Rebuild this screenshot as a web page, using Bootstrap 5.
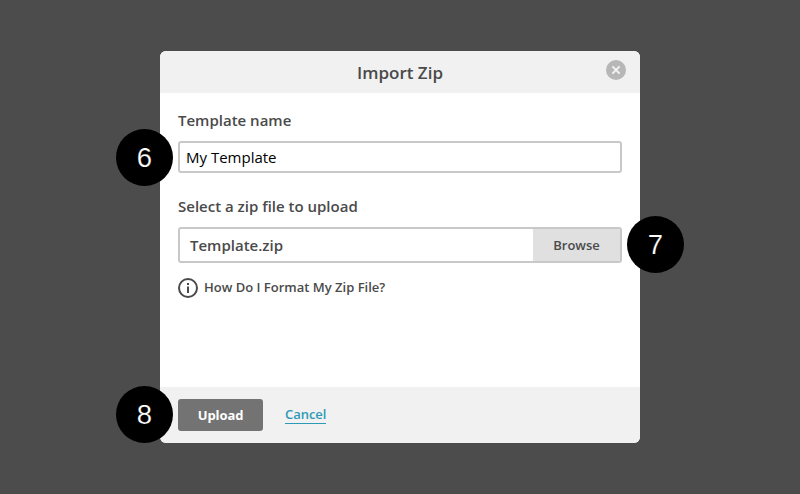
<!DOCTYPE html>
<html lang="en">
<head>
<meta charset="utf-8">
<meta name="viewport" content="width=device-width, initial-scale=1">
<title>Import Zip</title>
<link href="https://cdn.jsdelivr.net/npm/bootstrap@5.3.0/dist/css/bootstrap.min.css" rel="stylesheet">
<style>
  body { background: #4c4c4c; color: #4a4a4a; font: 600 15px/20px "Open Sans", sans-serif; height: 494px; }
  .dialog-box { width: 480px; height: 392px; margin-top: 51px; }
  .dialog-panel { border-radius: 6px; background: #fff; }
  .dialog-head { height: 42px; background: #f1f1f1; }
  .dialog-title { font-size: 17px; line-height: 24px; font-weight: 600; padding-top: 2px; }
  .close-btn { top: 9px; right: 14px; line-height: 0; }
  .dialog-main { padding: 17px 18px 0; }
  .field-label { line-height: 20px; margin-bottom: 11px; }
  .name-input { height: 32px; border: 2px solid #c8c8c8; border-radius: 3px; padding: 0 6px; font-size: 15px; font-weight: 400; color: #000; margin-bottom: 23px; }
  .file-box { height: 36px; border: 2px solid #c8c8c8; border-radius: 3px; }
  .file-name { padding-left: 10px; }
  .browse-btn { width: 87px; border-radius: 0; background: #e0e0e0; color: #4a4a4a; font-size: 13px; font-weight: 600; padding: 2px 0 0; border: 0; }
  .help-link { font-size: 13px; color: #4a4a4a; margin-top: 15px; gap: 6px; line-height: 20px; }
  .help-link span { margin-top: -2px; }
  .dialog-foot { height: 56px; background: #f1f1f1; padding: 0 18px; gap: 22px; }
  .upload-btn { width: 85px; height: 32px; padding: 1px 0 0; border: 0; border-radius: 3px; background: #737373; color: #fff; font-size: 13px; font-weight: 700; letter-spacing: -.1px; }
  .cancel-link { font-size: 13px; line-height: 17px; color: #2c9ab7; border-bottom: 1px solid #2c9ab7; margin-top: -1px; letter-spacing: -.05px; }
  .step { width: 57px; height: 57px; background: #000; color: #fff; font: 400 27.5px/58px "Liberation Sans", sans-serif; -webkit-text-stroke: .2px #000; }
  .step-6 { left: -44px; top: 78px; }
  .step-7 { left: 467px; top: 165px; }
  .step-8 { left: -44px; top: 335px; }
</style>
</head>
<body class="d-flex justify-content-center align-items-start overflow-hidden">
<div class="dialog-box position-relative" role="dialog" aria-labelledby="title">
  <div class="dialog-panel d-flex flex-column h-100 overflow-hidden">
    <header class="dialog-head d-flex justify-content-center align-items-center position-relative">
      <h1 class="dialog-title m-0" id="title">Import Zip</h1>
      <button type="button" class="close-btn btn p-0 border-0 position-absolute" aria-label="Close">
        <svg width="20" height="20" viewBox="0 0 20 20"><circle cx="10" cy="10" r="10" fill="#b7b7b7"/><path d="M6.4 6.4l7.2 7.2M13.6 6.4l-7.2 7.2" stroke="#f4f4f4" stroke-width="1.9"/></svg>
      </button>
    </header>
    <main class="dialog-main flex-grow-1">
      <label class="field-label d-block" for="name">Template name</label>
      <input id="name" class="name-input form-control shadow-none" type="text" value="My Template">
      <div class="field-label">Select a zip file to upload</div>
      <div class="file-box d-flex overflow-hidden">
        <span class="file-name flex-grow-1 align-self-center">Template.zip</span>
        <button type="button" class="browse-btn btn">Browse</button>
      </div>
      <a href="#" class="help-link d-flex align-items-center text-decoration-none">
        <svg width="20" height="20" viewBox="0 0 20 20"><circle cx="10" cy="10" r="9" fill="none" stroke="#4a4a4a" stroke-width="2"/><path d="M9 5h2v2H9zM9 8.5h2V15H9z" fill="#4a4a4a"/></svg>
        <span>How Do I Format My Zip File?</span>
      </a>
    </main>
    <footer class="dialog-foot d-flex align-items-center">
      <button type="button" class="upload-btn btn">Upload</button>
      <a href="#" class="cancel-link text-decoration-none">Cancel</a>
    </footer>
  </div>
  <span class="step step-6 position-absolute rounded-circle text-center">6</span>
  <span class="step step-7 position-absolute rounded-circle text-center">7</span>
  <span class="step step-8 position-absolute rounded-circle text-center">8</span>
</div>
<script src="https://cdn.jsdelivr.net/npm/bootstrap@5.3.0/dist/js/bootstrap.bundle.min.js"></script>
</body>
</html>
